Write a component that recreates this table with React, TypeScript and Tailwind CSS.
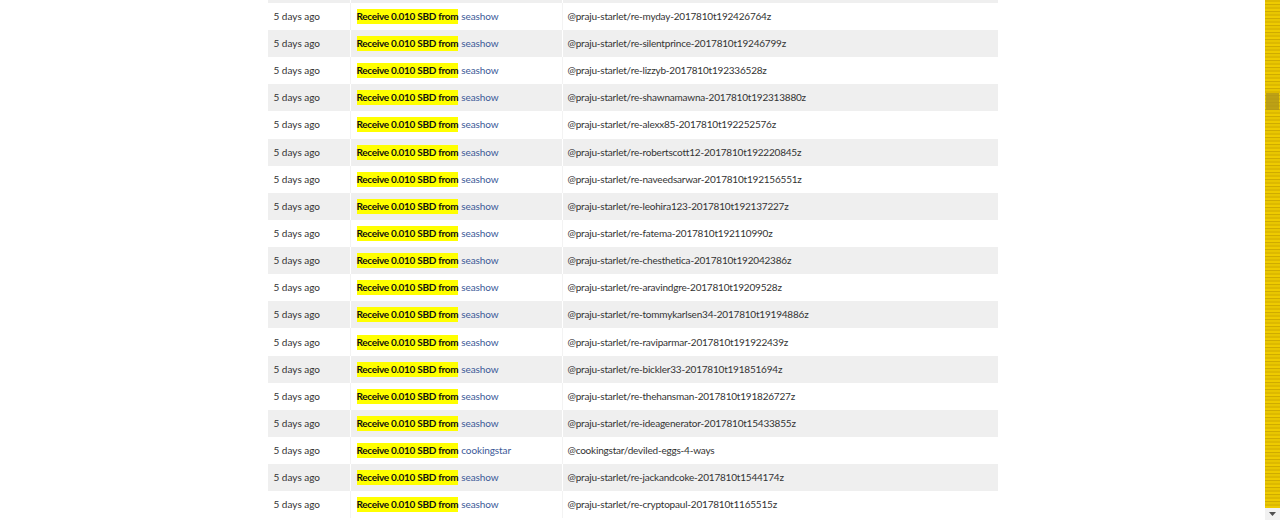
const rows: [string, string][] = [
  ['seashow', '@praju-starlet/re-myday-2017810t192426764z'],
  ['seashow', '@praju-starlet/re-silentprince-2017810t19246799z'],
  ['seashow', '@praju-starlet/re-lizzyb-2017810t192336528z'],
  ['seashow', '@praju-starlet/re-shawnamawna-2017810t192313880z'],
  ['seashow', '@praju-starlet/re-alexx85-2017810t192252576z'],
  ['seashow', '@praju-starlet/re-robertscott12-2017810t192220845z'],
  ['seashow', '@praju-starlet/re-naveedsarwar-2017810t192156551z'],
  ['seashow', '@praju-starlet/re-leohira123-2017810t192137227z'],
  ['seashow', '@praju-starlet/re-fatema-2017810t192110990z'],
  ['seashow', '@praju-starlet/re-chesthetica-2017810t192042386z'],
  ['seashow', '@praju-starlet/re-aravindgre-2017810t19209528z'],
  ['seashow', '@praju-starlet/re-tommykarlsen34-2017810t19194886z'],
  ['seashow', '@praju-starlet/re-raviparmar-2017810t191922439z'],
  ['seashow', '@praju-starlet/re-bickler33-2017810t191851694z'],
  ['seashow', '@praju-starlet/re-thehansman-2017810t191826727z'],
  ['seashow', '@praju-starlet/re-ideagenerator-2017810t15433855z'],
  ['cookingstar', '@cookingstar/deviled-eggs-4-ways'],
  ['seashow', '@praju-starlet/re-jackandcoke-2017810t1544174z'],
  ['seashow', '@praju-starlet/re-cryptopaul-2017810t1165515z'],
];

export default function App() {
  return (
    <div
      className="flex h-[520px] w-[1280px] overflow-hidden bg-white text-[10px] text-[#333]"
      style={{ fontFamily: 'Lato, "Open Sans", sans-serif' }}
    >
      {/* transfer history */}
      <div className="flex-1">
        <div className="mx-auto w-[730px]">
          {/* tail of the row above the fold */}
          <div className="flex h-[2.8px] bg-[#efefef]">
            <div className="w-[82px]" />
            <div className="w-[212px] border-l border-white" />
            <div className="flex-1 border-l border-white" />
          </div>
          {rows.map(([from, memo], i) => {
            const grey = i % 2 === 1;
            return (
              <div
                key={i}
                className={`flex h-[27.15px] items-center ${grey ? 'bg-[#efefef]' : 'bg-white'}`}
              >
                <div className="w-[82px] pl-[6px]">5 days ago</div>
                <div
                  className={`flex h-full w-[212px] items-center border-l pl-[6px] ${
                    grey ? 'border-white' : 'border-[#f3f3f3]'
                  }`}
                >
                  <span className="bg-[#ffff00] font-bold tracking-[-0.3px] text-[#111]">
                    Receive 0.010 SBD from
                  </span>
                  <a className="ml-[3px] tracking-[-0.1px] text-[#3b5998]">{from}</a>
                </div>
                <div
                  className={`flex h-full flex-1 items-center border-l pl-[5px] tracking-[-0.2px] ${
                    grey ? 'border-white' : 'border-[#f3f3f3]'
                  }`}
                >
                  {memo}
                </div>
              </div>
            );
          })}
        </div>
      </div>

      {/* scrollbar */}
      <div className="flex w-[15px] flex-col bg-[#f1f1f1]">
        <div className="relative flex-1 bg-[repeating-linear-gradient(180deg,#ddb900_0px,#ddb900_2px,#eecb00_2px,#eecb00_4px,#cfab00_4px,#cfab00_5px,#e8c600_5px,#e8c600_7px)]">
          <div className="absolute left-[1px] right-[1px] top-[93px] h-[17px] bg-[#b0961a]/80" />
        </div>
        <div className="flex h-[12px] items-center justify-center">
          <svg width="7" height="4" viewBox="0 0 7 4">
            <path d="M0 0h7L3.5 4z" fill="#505050" />
          </svg>
        </div>
      </div>
    </div>
  );
}
